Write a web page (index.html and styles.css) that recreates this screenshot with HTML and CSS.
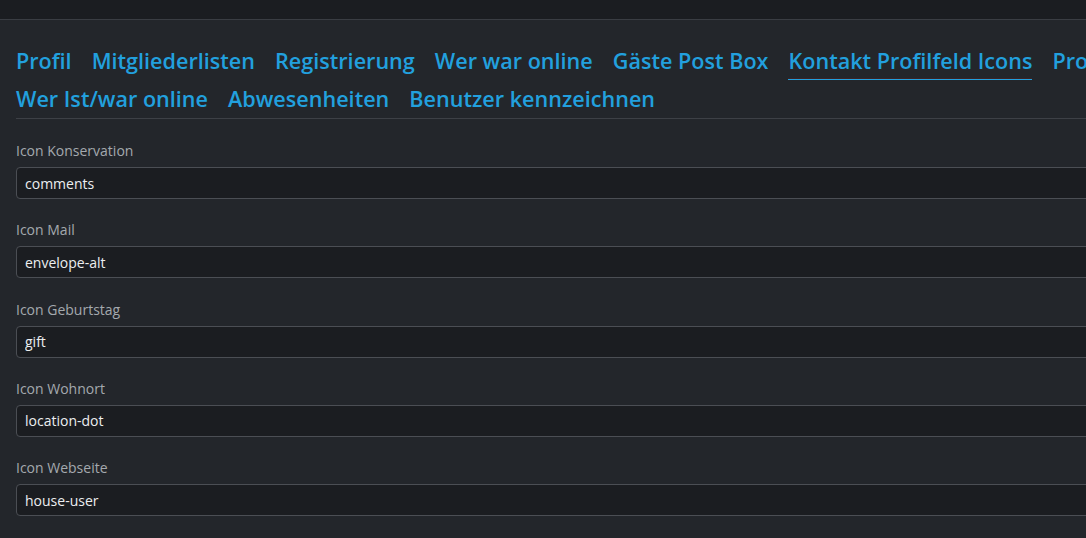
FILE: index.html
```html
<!DOCTYPE html>
<html lang="de">
<head>
<meta charset="utf-8">
<title>Kontakt Profilfeld Icons</title>
<link rel="stylesheet" href="styles.css">
</head>
<body>
<div class="topbar"></div>
<div class="page">
  <nav class="tabs">
    <a class="tab">Profil</a>
    <a class="tab">Mitgliederlisten</a>
    <a class="tab">Registrierung</a>
    <a class="tab">Wer war online</a>
    <a class="tab">Gäste Post Box</a>
    <a class="tab active">Kontakt Profilfeld Icons</a>
    <a class="tab">Profilfelder</a>
    <a class="tab">Wer Ist/war online</a>
    <a class="tab">Abwesenheiten</a>
    <a class="tab">Benutzer kennzeichnen</a>
  </nav>
  <form class="form">
    <div class="field">
      <label class="label">Icon Konservation</label>
      <input class="input" type="text" value="comments">
    </div>
    <div class="field">
      <label class="label">Icon Mail</label>
      <input class="input" type="text" value="envelope-alt">
    </div>
    <div class="field">
      <label class="label">Icon Geburtstag</label>
      <input class="input" type="text" value="gift">
    </div>
    <div class="field">
      <label class="label">Icon Wohnort</label>
      <input class="input" type="text" value="location-dot">
    </div>
    <div class="field">
      <label class="label">Icon Webseite</label>
      <input class="input" type="text" value="house-user">
    </div>
  </form>
</div>
</body>
</html>
```
FILE: styles.css
```css
html, body {
  margin: 0;
  padding: 0;
  background: #23262b;
  overflow: hidden;
  font-family: "Open Sans", "Noto Sans", sans-serif;
}
.topbar {
  height: 19px;
  background: #1b1d21;
  border-bottom: 1px solid #3a3d43;
}
.page {
  width: 1300px;
  padding: 23px 0 0 16px;
}
.tabs {
  display: flex;
  flex-wrap: wrap;
  column-gap: 20px;
  row-gap: 1px;
  border-bottom: 1px solid #3d4046;
}
.tab {
  font-size: 21.6px;
  font-weight: 600;
  line-height: 36px;
  color: #22a0de;
  border-bottom: 1px solid transparent;
  cursor: pointer;
}
.tab.active {
  border-bottom-color: #22a0de;
  box-shadow: 0 -1px 0 #3b2326 inset;
}
.form {
  display: flex;
  flex-direction: column;
  gap: 21.25px;
  padding-top: 22px;
}
.field {
  display: flex;
  flex-direction: column;
  gap: 6px;
}
.label {
  font-size: 14px;
  line-height: 20px;
  color: #a4a9ae;
}
.input {
  box-sizing: border-box;
  height: 32px;
  width: 100%;
  margin: 0;
  padding: 0 8px;
  background: #1b1d21;
  border: 1px solid #4b4e54;
  border-radius: 4px;
  color: #eceef0;
  font-family: "Open Sans", "Noto Sans", sans-serif;
  font-size: 14px;
  outline: none;
}
```
